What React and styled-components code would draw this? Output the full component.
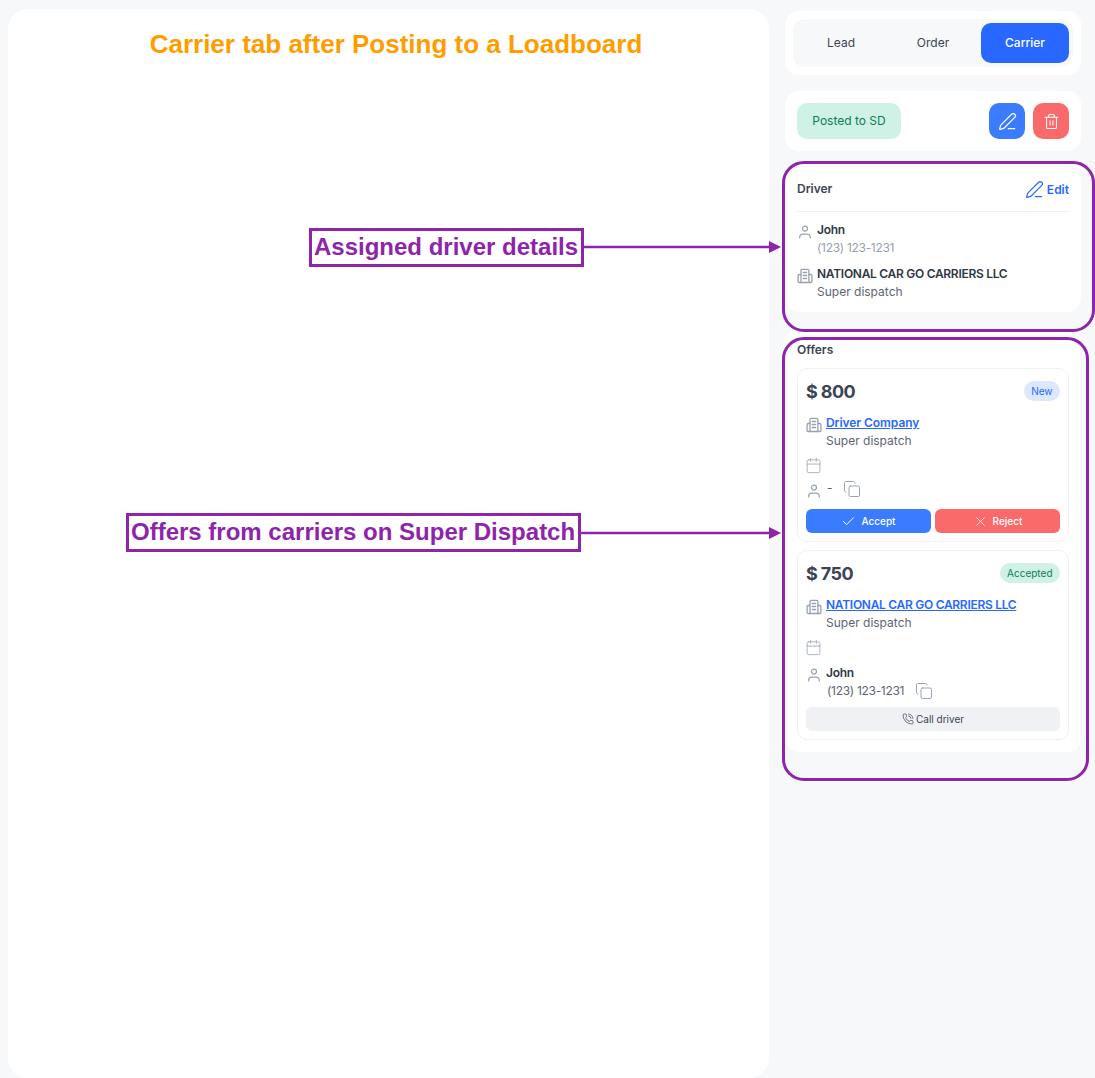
import styled, { createGlobalStyle } from "styled-components";
import { Calendar, Copy, PenLine, Trash2, Check, X, PhoneCall } from "lucide-react";

const GlobalStyle = createGlobalStyle`
  html, body {
    margin: 0;
    padding: 0;
    background: #f7f8fa;
  }
  * {
    box-sizing: border-box;
  }
`;

function BuildingIcon() {
  return (
    <svg width="16" height="16" viewBox="0 0 16 16" fill="none" stroke="#98a1b0" strokeWidth="1.3" strokeLinecap="round" strokeLinejoin="round">
      <path d="M4 14.5V2.6c0-.8.5-1.2 1.2-1.2h5.4c.8 0 1.3.5 1.3 1.2v11.9" />
      <path d="M4 6.5H2.2c-.7 0-1.1.5-1.1 1.1v5.8c0 .7.4 1.1 1.1 1.1h11.6c.7 0 1.1-.4 1.1-1.1V7.6c0-.6-.4-1.1-1.1-1.1H12" />
      <path d="M6.2 4.5h3.4M6.2 7.5h3.4M6.2 10.5h3.4" />
    </svg>
  );
}

function PersonIcon() {
  return (
    <svg width="16" height="16" viewBox="0 0 16 16" fill="none" stroke="#98a1b0" strokeWidth="1.2" strokeLinecap="round" strokeLinejoin="round">
      <circle cx="8" cy="4.6" r="2.5" />
      <path d="M2.7 14v-.8a3 3 0 0 1 3-3h4.600a3 3 0 0 1 3 3v.8" />
    </svg>
  );
}

function App() {
  return (
    <>
      <GlobalStyle />
      <Page>
        <MainPanel>
          <PageTitle>Carrier tab after Posting to a Loadboard</PageTitle>
        </MainPanel>

        <Sidebar>
          <Card $padding="8px">
            <Tabs>
              <Tab>Lead</Tab>
              <Tab>Order</Tab>
              <Tab $active>Carrier</Tab>
            </Tabs>
          </Card>

          <StatusCard>
            <StatusPill>Posted to SD</StatusPill>
            <ActionGroup>
              <SquareButton $bg="#3b7cff">
                <PenLine size={19} strokeWidth={1.5} />
              </SquareButton>
              <SquareButton $bg="#fb6a6b">
                <Trash2 size={17} strokeWidth={1.5} />
              </SquareButton>
            </ActionGroup>
          </StatusCard>

          <Card $padding="12px">
            <DriverHeader>
              <SectionTitle>Driver</SectionTitle>
              <EditLink>
                <PenLine size={19} strokeWidth={1.5} />
                Edit
              </EditLink>
            </DriverHeader>
            <DriverBody>
              <InfoRow>
                <IconSlot $top="3px">
                  <PersonIcon />
                </IconSlot>
                <div>
                  <StrongText>John</StrongText>
                  <MutedText>(123) 123-1231</MutedText>
                </div>
              </InfoRow>
              <InfoRow>
                <IconSlot $top="3px">
                  <BuildingIcon />
                </IconSlot>
                <div>
                  <StrongText>NATIONAL CAR GO CARRIERS LLC</StrongText>
                  <SubText>Super dispatch</SubText>
                </div>
              </InfoRow>
            </DriverBody>
          </Card>

          <OffersCard>
            <OffersTitle>Offers</OffersTitle>
            <OfferList>
              <OfferCard>
                <OfferHead>
                  <Price>$ 800</Price>
                  <Badge $bg="#dbe8ff" $color="#2868ff">New</Badge>
                </OfferHead>
                <InfoRow>
                  <IconSlot $top="3px">
                    <BuildingIcon />
                  </IconSlot>
                  <div>
                    <CompanyLink $spacing="-0.05px">Driver Company</CompanyLink>
                    <SubText>Super dispatch</SubText>
                  </div>
                </InfoRow>
                <IconLine>
                  <Calendar size={17} strokeWidth={1.3} color="#a7aeba" />
                </IconLine>
                <ContactRow>
                  <IconSlot $top="1px">
                    <PersonIcon />
                  </IconSlot>
                  <Dash>-</Dash>
                  <CopyButton $left="6px" $top="-2px">
                    <Copy size={18} strokeWidth={1.3} />
                  </CopyButton>
                </ContactRow>
                <ButtonRow>
                  <WideButton $bg="#3b7cff">
                    <Check size={15} strokeWidth={1.6} />
                    Accept
                  </WideButton>
                  <WideButton $bg="#fb6a6b">
                    <X size={15} strokeWidth={1.3} />
                    Reject
                  </WideButton>
                </ButtonRow>
              </OfferCard>

              <OfferCard>
                <OfferHead>
                  <Price>$ 750</Price>
                  <Badge $bg="#d0f1e6" $color="#0b8058">Accepted</Badge>
                </OfferHead>
                <InfoRow>
                  <IconSlot $top="3px">
                    <BuildingIcon />
                  </IconSlot>
                  <div>
                    <CompanyLink $spacing="-0.29px">NATIONAL CAR GO CARRIERS LLC</CompanyLink>
                    <SubText>Super dispatch</SubText>
                  </div>
                </InfoRow>
                <IconLine>
                  <Calendar size={17} strokeWidth={1.3} color="#a7aeba" />
                </IconLine>
                <ContactRow>
                  <IconSlot $top="3px">
                    <PersonIcon />
                  </IconSlot>
                  <div>
                    <StrongText>John</StrongText>
                    <PhoneLine>
                      <PhoneText>(123) 123-1231</PhoneText>
                      <CopyButton $left="11px" $top="0px">
                        <Copy size={18} strokeWidth={1.3} />
                      </CopyButton>
                    </PhoneLine>
                  </div>
                </ContactRow>
                <CallButton>
                  <PhoneCall size={12} strokeWidth={1.4} />
                  Call driver
                </CallButton>
              </OfferCard>
            </OfferList>
          </OffersCard>
        </Sidebar>

        <Outline $left="782px" $top="161px" $width="313px" $height="171px" />
        <Outline $left="782px" $top="337px" $width="307px" $height="444px" />

        <Label $left="309px" $top="228px">Assigned driver details</Label>
        <Label $left="126px" $top="513px">Offers from carriers on Super Dispatch</Label>

        <Arrow $left="583px" $top="240px" width="199" height="14" viewBox="0 0 199 14">
          <path d="M0 7H187" stroke="#8e24aa" strokeWidth="2.5" />
          <path d="M186 1L198 7L186 13Z" fill="#8e24aa" />
        </Arrow>
        <Arrow $left="580px" $top="526px" width="202" height="14" viewBox="0 0 202 14">
          <path d="M0 7H190" stroke="#8e24aa" strokeWidth="2.5" />
          <path d="M189 1L201 7L189 13Z" fill="#8e24aa" />
        </Arrow>
      </Page>
    </>
  );
}

export default App;

const Page = styled.div`
  position: relative;
  display: flex;
  align-items: flex-start;
  gap: 16px;
  width: 1095px;
  height: 1078px;
  padding: 9px 14px 0 8px;
  overflow: hidden;
  background: #f7f8fa;
  font-family: "Inter", "Liberation Sans", sans-serif;
  color: #2f3744;
`;

const MainPanel = styled.main`
  flex: none;
  width: 761px;
  height: 1069px;
  padding: 19px 0 0 15px;
  background: #ffffff;
  border-radius: 20px;
`;

const PageTitle = styled.h1`
  margin: 0;
  text-align: center;
  font-family: "Liberation Sans", Arial, sans-serif;
  font-size: 26px;
  line-height: 32px;
  font-weight: 700;
  color: #ff9d00;
`;

const Sidebar = styled.aside`
  flex: none;
  display: flex;
  flex-direction: column;
  gap: 16px;
  width: 296px;
  padding-top: 2px;
`;

const Card = styled.section`
  padding: ${(p) => p.$padding};
  background: #ffffff;
  border-radius: 14px;
`;

const Tabs = styled.div`
  display: flex;
  gap: 4px;
  padding: 4px;
  background: #f7f8fa;
  border-radius: 12px;
`;

const Tab = styled.div`
  display: flex;
  align-items: center;
  justify-content: center;
  width: 88px;
  height: 40px;
  padding-bottom: 1px;
  border-radius: 10px;
  font-size: 12px;
  font-weight: ${(p) => (p.$active ? 500 : 400)};
  background: ${(p) => (p.$active ? "#2868ff" : "transparent")};
  color: ${(p) => (p.$active ? "#ffffff" : "#3b4452")};
`;

const StatusCard = styled(Card)`
  display: flex;
  align-items: center;
  justify-content: space-between;
  padding: 12px;
`;

const StatusPill = styled.div`
  display: flex;
  align-items: center;
  justify-content: center;
  width: 104px;
  height: 36px;
  padding-bottom: 1px;
  border-radius: 10px;
  background: #d0f1e6;
  color: #0b8058;
  font-size: 12px;
  font-weight: 400;
`;

const ActionGroup = styled.div`
  display: flex;
  gap: 8px;
`;

const SquareButton = styled.button`
  display: flex;
  align-items: center;
  justify-content: center;
  width: 36px;
  height: 36px;
  padding: 0;
  border: none;
  border-radius: 10px;
  background: ${(p) => p.$bg};
  color: #ffffff;
`;

const DriverHeader = styled.div`
  display: flex;
  align-items: center;
  justify-content: space-between;
  height: 33px;
  padding-bottom: 12px;
  border-bottom: 1px solid #eef0f2;
`;

const SectionTitle = styled.div`
  height: 18px;
  font-size: 12px;
  line-height: 18px;
  font-weight: 600;
  color: #3b4452;
`;

const OffersTitle = styled(SectionTitle)`
  line-height: 20px;
`;

const EditLink = styled.a`
  display: flex;
  align-items: center;
  gap: 3px;
  font-size: 12px;
  font-weight: 600;
  color: #2868ff;
`;

const DriverBody = styled.div`
  display: flex;
  flex-direction: column;
  gap: 8px;
  height: 88px;
  padding-top: 9px;
`;

const InfoRow = styled.div`
  display: flex;
  align-items: flex-start;
  gap: 4px;
`;

const IconSlot = styled.span`
  flex: none;
  display: flex;
  width: 16px;
  height: 16px;
  margin-top: ${(p) => p.$top};
`;

const StrongText = styled.div`
  font-size: 12px;
  line-height: 18px;
  font-weight: 600;
  letter-spacing: -0.29px;
  color: #2f3744;
  white-space: nowrap;
`;

const MutedText = styled.div`
  font-size: 12px;
  line-height: 18px;
  letter-spacing: -0.3px;
  color: #98a1b0;
`;

const SubText = styled.div`
  font-size: 12px;
  line-height: 18px;
  color: #5c6575;
`;

const PhoneText = styled(SubText)`
  letter-spacing: -0.3px;
  padding-left: 1px;
`;

const OffersCard = styled(Card)`
  padding: 12px;
`;

const OfferList = styled.div`
  display: flex;
  flex-direction: column;
  gap: 8px;
  margin-top: 10px;
`;

const OfferCard = styled.article`
  display: flex;
  flex-direction: column;
  padding: 8px;
  border: 1px solid #f0f1f3;
  border-radius: 10px;
`;

const OfferHead = styled.div`
  display: flex;
  align-items: center;
  justify-content: space-between;
  height: 28px;
  margin-bottom: 9px;
`;

const Price = styled.div`
  font-size: 18px;
  font-weight: 700;
  letter-spacing: -0.6px;
  color: #3b4452;
`;

const Badge = styled.span`
  display: flex;
  align-items: center;
  height: 20px;
  padding: 0 7.5px;
  border-radius: 10px;
  font-size: 10px;
  font-weight: 400;
  background: ${(p) => p.$bg};
  color: ${(p) => p.$color};
`;

const CompanyLink = styled.a`
  display: block;
  font-size: 12px;
  line-height: 18px;
  font-weight: 600;
  letter-spacing: ${(p) => p.$spacing};
  color: #2868ff;
  text-decoration: underline;
  white-space: nowrap;
`;

const IconLine = styled.div`
  display: flex;
  height: 16px;
  margin-top: 7px;
  margin-left: -1px;
`;

const ContactRow = styled(InfoRow)`
  min-height: 20px;
  margin: 9px 0 7px;
`;

const Dash = styled.span`
  font-size: 12px;
  line-height: 18px;
  margin-top: -3px;
  padding-left: 1px;
  color: #5c6575;
`;

const PhoneLine = styled.div`
  display: flex;
  align-items: flex-start;
`;

const CopyButton = styled.span`
  display: flex;
  margin-left: ${(p) => p.$left};
  margin-top: ${(p) => p.$top};
  color: #98a1b0;
`;

const ButtonRow = styled.div`
  display: grid;
  grid-template-columns: 1fr 1fr;
  gap: 4px;
`;

const WideButton = styled.button`
  display: flex;
  align-items: center;
  justify-content: center;
  gap: 5px;
  height: 24px;
  padding: 0;
  border: none;
  border-radius: 6px;
  background: ${(p) => p.$bg};
  color: #ffffff;
  font-family: inherit;
  font-size: 10px;
  font-weight: 500;
`;

const CallButton = styled.button`
  display: flex;
  align-items: center;
  justify-content: center;
  gap: 2px;
  height: 24px;
  padding: 0;
  border: none;
  border-radius: 6px;
  background: #f0f1f4;
  color: #3b4452;
  font-family: inherit;
  font-size: 10px;
  font-weight: 400;
`;

const Outline = styled.div`
  position: absolute;
  left: ${(p) => p.$left};
  top: ${(p) => p.$top};
  width: ${(p) => p.$width};
  height: ${(p) => p.$height};
  border: 3px solid #8e24aa;
  border-radius: 22px;
  pointer-events: none;
`;

const Label = styled.div`
  position: absolute;
  left: ${(p) => p.$left};
  top: ${(p) => p.$top};
  height: 39px;
  padding: 0 3px 0 2px;
  border: 3px solid #8e24aa;
  background: #ffffff;
  font-family: "Liberation Sans", Arial, sans-serif;
  font-size: 24px;
  line-height: 31px;
  font-weight: 700;
  color: #8e24aa;
  white-space: nowrap;
`;

const Arrow = styled.svg`
  position: absolute;
  left: ${(p) => p.$left};
  top: ${(p) => p.$top};
`;
